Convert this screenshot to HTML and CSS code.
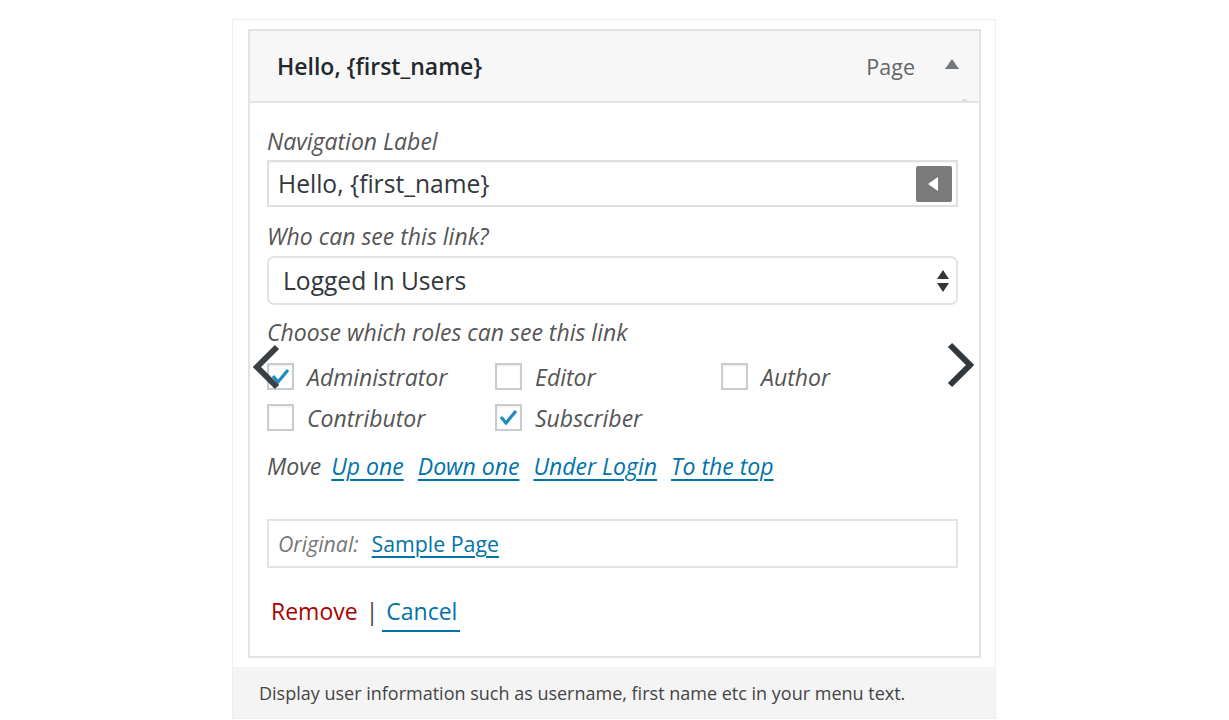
FILE: index.html
```html
<!DOCTYPE html>
<html>
<head>
<meta charset="utf-8">
<link rel="stylesheet" href="styles.css">
</head>
<body>
<div class="frame">
  <div class="item">
    <div class="item-head">
      <span class="item-title">Hello, {first_name}</span>
      <span class="item-type">Page</span>
      <svg class="toggle" width="14" height="10" viewBox="0 0 14 10"><polygon points="7,0 14,10 0,10" fill="#72777c"/></svg>
      <span class="grip">..</span>
    </div>
    <div class="item-body">
      <div class="label first">Navigation Label</div>
      <div class="field">
        <span class="field-text">Hello, {first_name}</span>
        <span class="field-btn"><svg width="10" height="14" viewBox="0 0 10 14"><polygon points="10,0 10,14 0,7" fill="#fff"/></svg></span>
      </div>
      <div class="label who">Who can see this link?</div>
      <div class="select">
        <span class="select-text">Logged In Users</span>
        <svg class="select-arrows" width="12" height="22" viewBox="0 0 12 22"><polygon points="6,0 12,9 0,9" fill="#32373c"/><polygon points="0,13 12,13 6,22" fill="#32373c"/></svg>
      </div>
      <div class="label choose">Choose which roles can see this link</div>
      <div class="roles">
        <div class="role"><span class="box checked"><svg width="23" height="23" viewBox="0 0 23 23"><polyline points="4,11 9,17 19,5" fill="none" stroke="#1e8cbe" stroke-width="3.2"/></svg></span><span class="role-name">Administrator</span></div>
        <div class="role"><span class="box"></span><span class="role-name">Editor</span></div>
        <div class="role"><span class="box"></span><span class="role-name">Author</span></div>
        <div class="role"><span class="box"></span><span class="role-name">Contributor</span></div>
        <div class="role"><span class="box checked"><svg width="23" height="23" viewBox="0 0 23 23"><polyline points="4,11 9,17 19,5" fill="none" stroke="#1e8cbe" stroke-width="3.2"/></svg></span><span class="role-name">Subscriber</span></div>
      </div>
      <div class="move">
        <span class="move-label">Move</span>
        <a class="move-link" href="#">Up one</a>
        <a class="move-link" href="#">Down one</a>
        <a class="move-link" href="#">Under Login</a>
        <a class="move-link" href="#">To the top</a>
      </div>
      <div class="original">
        <span class="orig-label">Original:</span>
        <a class="orig-link" href="#">Sample Page</a>
      </div>
      <div class="actions">
        <a class="remove" href="#">Remove</a>
        <span class="sep">|</span>
        <a class="cancel" href="#">Cancel</a>
      </div>
    </div>
  </div>
  <div class="caption">Display user information such as username, first name etc in your menu text.</div>
  <svg class="chev chev-left" width="30" height="46" viewBox="0 0 30 46"><polyline points="26,3 6,23 26,43" fill="none" stroke="#3a3f44" stroke-width="6"/></svg>
  <svg class="chev chev-right" width="30" height="46" viewBox="0 0 30 46"><polyline points="3,3 23,23 3,43" fill="none" stroke="#32373c" stroke-width="6"/></svg>
</div>
</body>
</html>
```
FILE: styles.css
```css
html, body {
  margin: 0;
  padding: 0;
  background: #fff;
}
body {
  font-family: "Open Sans", "Noto Sans", sans-serif;
  color: #555;
}
.frame {
  position: relative;
  width: 762px;
  margin: 19px 0 0 232px;
  border: 1px solid #eeeeee;
  padding-top: 9px;
}
.item {
  margin: 0 14px 0 15px;
  border: 2px solid #e3e3e3;
  background: #fff;
}
.item-head {
  position: relative;
  display: flex;
  align-items: center;
  height: 70px;
  background: #f7f7f7;
  border-bottom: 2px solid #e3e3e3;
  padding: 0 20px 0 27px;
}
.item-title {
  flex: 1;
  font-size: 23px;
  font-weight: 600;
  color: #23282d;
}
.item-type {
  font-size: 21.5px;
  color: #666;
  margin-right: 30px;
}
.toggle {
  margin-top: -4px;
}
.grip {
  position: absolute;
  right: 12px;
  bottom: 0;
  font-size: 10px;
  line-height: 8px;
  color: #aaa;
}
.item-body {
  display: flex;
  flex-direction: column;
  padding: 23px 21px 0 17px;
  height: 553px;
  box-sizing: border-box;
}
.label {
  font-size: 23px;
  line-height: 30px;
  font-style: italic;
  color: #555;
}
.label.who {
  margin-top: 14px;
}
.label.choose {
  margin-top: 12px;
}
.field {
  margin-top: 4px;
  height: 47px;
  box-sizing: border-box;
  border: 2px solid #e0e0e0;
  box-shadow: inset 0 1px 2px rgba(0,0,0,0.05);
  display: flex;
  align-items: center;
  padding: 0 4px 0 9px;
}
.field-text {
  flex: 1;
  font-size: 24.6px;
  color: #32373c;
}
.field-btn {
  width: 36px;
  height: 36px;
  background: #7a7a7a;
  border-radius: 2px;
  display: flex;
  align-items: center;
  justify-content: center;
}
.field-btn svg {
  margin-left: -2px;
}
.select {
  margin-top: 5px;
  height: 49px;
  box-sizing: border-box;
  border: 2px solid #e3e3e3;
  border-radius: 7px;
  display: flex;
  align-items: center;
  padding: 0 7px 0 14px;
}
.select-text {
  flex: 1;
  font-size: 24.6px;
  color: #32373c;
}
.roles {
  margin-top: 16px;
  display: grid;
  grid-template-columns: 228px 226px 1fr;
  row-gap: 14px;
}
.role {
  display: flex;
  align-items: center;
  height: 27px;
}
.box {
  width: 27px;
  height: 27px;
  box-sizing: border-box;
  border: 2px solid #c9cccf;
  box-shadow: inset 0 1px 2px rgba(0,0,0,0.08);
  display: flex;
  align-items: center;
  justify-content: center;
  margin-right: 13px;
}
.role-name {
  font-size: 23px;
  font-style: italic;
  color: #555;
}
.move {
  margin-top: 20px;
  display: flex;
  align-items: center;
  height: 30px;
  font-size: 23px;
  font-style: italic;
}
.move-label {
  color: #555;
  margin-right: 10px;
}
.move-link {
  color: #0073aa;
  text-decoration: underline;
  text-decoration-thickness: 1.5px;
  text-underline-offset: 4px;
  margin-right: 14px;
}
.original {
  margin-top: 38px;
  height: 49px;
  box-sizing: border-box;
  border: 2px solid #e3e3e3;
  display: flex;
  align-items: center;
  padding-left: 9px;
  font-size: 21.3px;
}
.orig-label {
  font-style: italic;
  color: #777;
  margin-right: 13px;
}
.orig-link {
  color: #0073aa;
  text-decoration: underline;
  text-decoration-thickness: 1.5px;
  text-underline-offset: 4px;
}
.actions {
  margin-top: 27px;
  display: flex;
  align-items: center;
  font-size: 23px;
  padding-left: 4px;
}
.remove {
  color: #a00;
  text-decoration: none;
}
.sep {
  color: #444;
  margin: 0 4px 0 8px;
}
.cancel {
  color: #0073aa;
  text-decoration: none;
  padding: 0 3px 3px 4px;
  border-bottom: 2px solid #0073aa;
  margin-bottom: -5px;
}
.caption {
  margin-top: 9px;
  height: 51px;
  background: #f4f4f4;
  display: flex;
  align-items: center;
  padding-left: 26px;
  font-size: 18px;
  color: #444;
}
.chev {
  position: absolute;
}
.chev-left {
  left: 18px;
  top: 324px;
}
.chev-right {
  left: 714px;
  top: 322px;
}
```
